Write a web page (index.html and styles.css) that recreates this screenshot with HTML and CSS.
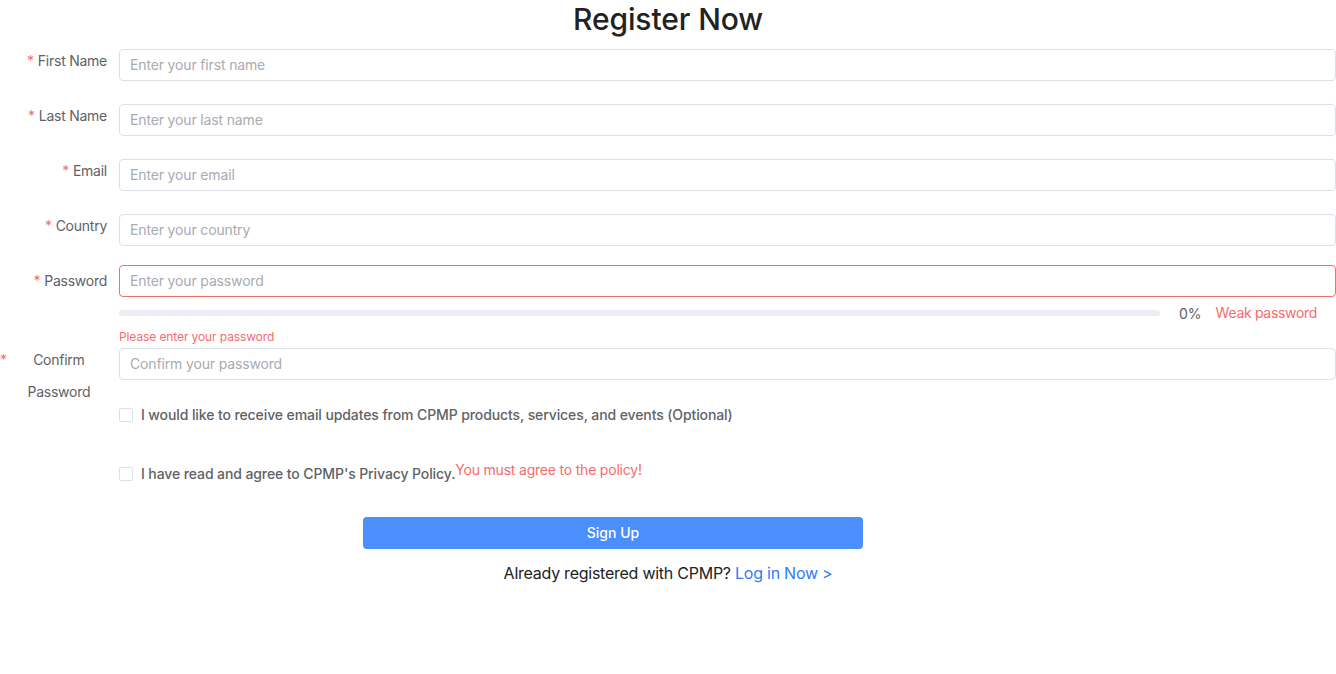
FILE: index.html
```html
<!DOCTYPE html>
<html lang="en">
<head>
<meta charset="utf-8">
<title>Register Now</title>
<link rel="stylesheet" href="styles.css">
</head>
<body>
<div class="page">
  <h2 class="title">Register Now</h2>
  <form class="form">
    <div class="item">
      <label class="label"><span class="req">*</span><span class="ltext">First Name</span></label>
      <div class="field"><input class="input" placeholder="Enter your first name"></div>
    </div>
    <div class="item">
      <label class="label"><span class="req">*</span><span class="ltext">Last Name</span></label>
      <div class="field"><input class="input" placeholder="Enter your last name"></div>
    </div>
    <div class="item">
      <label class="label"><span class="req">*</span><span class="ltext">Email</span></label>
      <div class="field"><input class="input" placeholder="Enter your email"></div>
    </div>
    <div class="item item-tight">
      <label class="label"><span class="req">*</span><span class="ltext">Country</span></label>
      <div class="field"><input class="input" placeholder="Enter your country"></div>
    </div>
    <div class="item item-pw">
      <label class="label label-pw"><span class="req">*</span><span class="ltext">Password</span></label>
      <div class="field">
        <input class="input input-error" type="password" placeholder="Enter your password">
        <div class="strength">
          <div class="bar"><div class="bar-fill" style="width:0%"></div></div>
          <span class="pct">0%</span>
          <span class="weak">Weak password</span>
        </div>
        <div class="err">Please enter your password</div>
      </div>
    </div>
    <div class="item item-confirm">
      <label class="label label-confirm"><span class="req">*</span><span class="ltext ltext-center">Confirm Password</span></label>
      <div class="field"><input class="input" type="password" placeholder="Confirm your password"></div>
    </div>
    <div class="check check-1">
      <span class="box"></span>
      <span class="ctext">I would like to receive email updates from CPMP products, services, and events (Optional)</span>
    </div>
    <div class="check check-2">
      <span class="box"></span>
      <span class="ctext">I have read and agree to CPMP's Privacy Policy.</span>
      <span class="cerr">You must agree to the policy!</span>
    </div>
    <div class="actions">
      <button type="button" class="btn">Sign Up</button>
    </div>
  </form>
  <p class="login">Already registered with CPMP? <a class="link" href="#">Log in Now &gt;</a></p>
</div>
</body>
</html>
```
FILE: styles.css
```css
* { box-sizing: border-box; }
html, body { margin: 0; padding: 0; background: #fff; }
body {
  font-family: Inter, "Helvetica Neue", "Liberation Sans", Arial, sans-serif;
  color: #606266;
  font-size: 14px;
}
.page { width: 1336px; }
.title {
  margin: 0;
  text-align: center;
  font-size: 30px;
  line-height: 38px;
  font-weight: 500;
  color: #222;
  letter-spacing: -0.1px;
}
.form { margin-top: 11px; }
.item {
  display: flex;
  align-items: flex-start;
  margin-bottom: 23px;
}
.item-tight { margin-bottom: 19px; }
.item-pw { margin-bottom: 3px; }
.label {
  flex: 0 0 119px;
  display: flex;
  justify-content: flex-end;
  padding-right: 12px;
  line-height: 24px;
  font-size: 14px;
  color: #606266;
  letter-spacing: -0.25px;
}
.label-pw { line-height: 32px; }
.label-confirm {
  justify-content: flex-start;
  line-height: 32px;
  margin-top: -4px;
  height: 32px;
}
.req { color: #f56c6c; margin-right: 4px; }
.ltext-center { flex: 1; text-align: center; }
.field { flex: 1; min-width: 0; }
.input {
  display: block;
  width: 100%;
  height: 32px;
  border: 1px solid #dcdfe6;
  border-radius: 4px;
  padding: 0 10px 1px;
  font-family: inherit;
  font-size: 14px;
  letter-spacing: -0.15px;
  color: #606266;
  outline: none;
  background: #fff;
}
.input::placeholder { color: #a8abb2; }
.input-error { border-color: #f56c6c; }
.strength {
  display: flex;
  align-items: center;
  height: 32px;
}
.bar {
  width: 1041px;
  height: 6px;
  border-radius: 3px;
  background: #ebeef5;
  overflow: hidden;
}
.bar-fill { height: 100%; background: #f56c6c; }
.pct { margin-left: 19px; font-size: 14px; color: #606266; line-height: 20px; padding-top: 2px; }
.weak { margin-left: 14px; color: #f56c6c; font-size: 14px; line-height: 20px; margin-top: -1px; letter-spacing: -0.3px; }
.err { color: #f56c6c; font-size: 12px; line-height: 16px; letter-spacing: -0.1px; }
.check {
  display: flex;
  align-items: flex-start;
  margin-left: 119px;
  line-height: 20px;
}
.check-1 { margin-top: 25px; }
.check-2 { margin-top: 39px; }
.box {
  width: 14px;
  height: 14px;
  border: 1px solid #dcdfe6;
  border-radius: 2px;
  margin-top: 3px;
  margin-right: 8px;
  background: #fff;
  flex: 0 0 auto;
}
.ctext { font-weight: 500; color: #606266; font-size: 14px; letter-spacing: -0.1px; }
.cerr { color: #f56c6c; font-size: 14px; line-height: 12px; letter-spacing: -0.2px; }
.actions { margin-top: 33px; padding-left: 363px; }
.btn {
  display: block;
  width: 500px;
  height: 32px;
  border: none;
  border-radius: 4px;
  background: #4a8ffb;
  color: #fff;
  font-family: inherit;
  font-size: 14px;
  font-weight: 500;
  padding: 0 0 2px;
  cursor: pointer;
}
.login {
  margin: 12px 0 0;
  text-align: center;
  font-size: 16px;
  line-height: 24px;
  color: #222;
  letter-spacing: -0.25px;
}
.link { color: #2f7cf6; text-decoration: none; }
```
